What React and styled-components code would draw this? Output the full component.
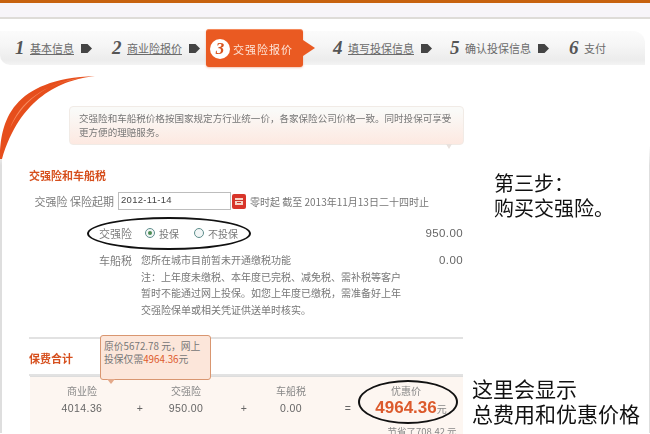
import React from "react";
import styled, { createGlobalStyle } from "styled-components";

const Global = createGlobalStyle`
  html, body { margin: 0; padding: 0; background: #fff; }
  body { font-family: "Noto Sans CJK SC", "Liberation Sans", sans-serif; }
`;
const Page = styled.div`
  position: relative; width: 650px; height: 434px; overflow: hidden; background: #fff; color: #777;
`;
const TopBar = styled.div`
  box-sizing: border-box; height: 19px; border-top: 3px solid #c7620f; border-bottom: 2px solid #dedcd8;
  background: #f7f5f9;
`;
const Stepper = styled.nav`
  display: flex; align-items: center; box-sizing: border-box; height: 34px; margin: 12px 5px 0 0; padding-left: 15px;
  border-radius: 0 12px 0 10px;
  background: linear-gradient(#fbfbfb, #f6f6f6 40%, #ececec 85%, #f4f4f4);
  filter: blur(0.45px);
`;
const Step = styled.div`
  display: flex; align-items: center; margin-left: ${p => p.$ml}px; height: 20px; flex: none;
`;
const Num = styled.span`
  width: 14px; font: italic bold 19px "Liberation Serif", serif; color: #555; line-height: 20px;
`;
const StepLabel = styled.span`
  font-size: 11px; line-height: 14px; color: #6b6b6b; white-space: nowrap;
  text-decoration: ${p => (p.$link ? "underline" : "none")};
  margin-left: 1px;
`;
const ArrowIcon = styled.svg`
  width: 11px; height: 11px; margin-left: 7px; flex: none;
`;
const Arrow = () => (
  <ArrowIcon viewBox="0 0 11 11"><path d="M0 1h6.5L11 5.500 6.500 10H0z" fill="#444" /></ArrowIcon>
);
const ActiveStep = styled.div`
  position: relative; display: flex; align-items: center; flex: none; box-sizing: border-box;
  width: 97px; height: 38px; margin-left: 6px; margin-right: 30px; padding-left: 4px;
  background: #ea5a22; border-radius: 3px; border-top: 1px solid #f58a5c;
  box-shadow: 0 1px 2px rgba(220,90,40,.35);
  &::after {
    content: ""; position: absolute; left: 97px; top: 10px;
    border-left: 12px solid #ea5a22; border-top: 8px solid transparent; border-bottom: 8px solid transparent;
  }
`;
const ActiveNum = styled.span`
  display: flex; align-items: center; justify-content: center; width: 20px; height: 20px; border-radius: 50%;
  background: #fff; color: #d9541e; font: italic bold 17px "Liberation Serif", serif;
`;
const ActiveLabel = styled.span`
  margin-left: 3px; font-size: 11px; color: #fde3d6; white-space: nowrap; letter-spacing: 1px;
`;
const Panel = styled.main`
  position: relative; box-sizing: border-box; height: 357px; margin-top: 11px; padding: 30px 186px 0 27px;
  border-left: 2px solid; border-right: 1px solid;
  border-image: linear-gradient(transparent 70px, #dedede 90px) 1;
  filter: blur(0.45px);
`;
const Swoosh = styled.svg`
  position: absolute; left: -2px; top: 0; width: 96px; height: 84px;
`;
const Notice = styled.div`
  position: relative; box-sizing: border-box; width: 395px; height: 39px; margin-left: 40px; padding: 5px 9px;
  font-size: 9.55px; line-height: 13.500px; color: #777; border-radius: 4px;
  border: 1px solid #f1ebe6; background: linear-gradient(#fafaf8 10%, #fde9e1);
  &::after {
    content: ""; position: absolute; right: 11px; bottom: -5px;
    border-top: 5px solid #e9e2de; border-left: 3px solid transparent; border-right: 3px solid transparent;
  }
`;
const SectionTitle = styled.h2`
  margin: ${p => p.$mt}px 0 0; font-size: 11px; line-height: 16px; font-weight: 700; color: #d64f1d;
`;
const Row = styled.div`
  display: flex; align-items: center; margin-top: ${p => p.$mt}px;
`;
const Label = styled.span`
  width: ${p => p.$w}px; flex: none; text-align: right; font-size: 11px; line-height: 16px; color: #7c7c7c;
`;
const DateInput = styled.div`
  box-sizing: border-box; width: 113px; height: 18px; margin-left: 4px; padding-left: 2px;
  border: 1px solid #bdbdbd; background: #fff; font: 9.500px/14px "Liberation Sans", sans-serif; color: #444; letter-spacing: .3px;
`;
const CalBtn = styled.span`
  display: flex; align-items: center; justify-content: center; width: 14px; height: 15px; margin-left: 1px;
  border-radius: 2px; background: #d8352a;
`;
const SmallText = styled.span`
  margin-left: 4px; font-size: 10px; color: #777; white-space: nowrap;
`;
const Choices = styled.div`
  display: flex; align-items: center; margin-left: 13px; flex: 1;
`;
const Radio = styled.span`
  box-sizing: border-box; display: flex; align-items: center; justify-content: center;
  width: 10px; height: 10px; border-radius: 50%; border: 1px solid #5d8d8b; background: #f2f6f6;
  margin-left: ${p => p.$ml || 0}px;
  &::after { content: ""; width: 4px; height: 4px; border-radius: 50%; background: ${p => (p.$on ? "#4d8d55" : "transparent")}; }
`;
const ChoiceText = styled.span`
  margin-left: 4px; font-size: 10px; color: #777; white-space: nowrap;
`;
const Amount = styled.span`
  font: 11.500px "Liberation Sans", sans-serif; color: #666; letter-spacing: .4px; margin-top: ${p => p.$mt || 0}px;
`;
const TaxRow = styled.div`
  display: flex; align-items: flex-start; margin-top: 11px;
`;
const TaxBody = styled.div`
  flex: 1; margin-left: 9px; font-size: 10px; line-height: 16.500px; color: #777; white-space: nowrap;
`;
const Divider = styled.div`
  height: 2px; background: #e2e2e2; margin-top: ${p => p.$mt}px;
`;
const Summary = styled.div`
  display: grid; grid-template-columns: 80px 36px 56px 60px 34px 80px 36px; grid-auto-rows: 18px;
  justify-items: center; align-items: center; box-sizing: border-box; height: 60px; margin-left: 1px;
  padding: 4px 0 0 12px; border-top: 1px solid #ddd; background: #fdf6f1;
`;
const Head = styled.span`
  font-size: 10px; color: #888; white-space: nowrap; grid-row: 1; grid-column: ${p => p.$c};
`;
const Val = styled.span`
  font: 10.500px "Liberation Sans", sans-serif; color: #666; letter-spacing: .4px; white-space: nowrap; grid-row: 2; grid-column: ${p => p.$c};
`;
const Price = styled.span`
  grid-row: 2; grid-column: 7; white-space: nowrap; font: bold 17px "Liberation Sans", sans-serif; color: #dc5a2c; margin-left: 10px;
`;
const Yuan = styled.small`
  font: 10px "Noto Sans CJK SC", sans-serif; color: #888;
`;
const Saved = styled.span`
  grid-row: 3; grid-column: 7; white-space: nowrap; font-size: 9.500px; color: #888; margin-left: 32px; margin-top: 10px;
`;
const Tooltip = styled.div`
  position: absolute; left: 98px; top: 259px; box-sizing: border-box; width: 111px; height: 45px; padding: 4px 3px;
  font-size: 9.800px; line-height: 13px; color: #777; background: #fce6da; border: 1px solid #d99670; border-radius: 3px;
  &::after {
    content: ""; position: absolute; left: 6px; bottom: -5px;
    border-top: 5px solid #e4a98a; border-left: 4px solid transparent; border-right: 4px solid transparent;
  }
`;
const Strong = styled.span`
  color: #dc5a2c;
`;
const Ellipse = styled.div`
  position: absolute; left: ${p => p.$x}px; top: ${p => p.$y}px; width: ${p => p.$w}px; height: ${p => p.$h}px;
  box-sizing: border-box; border: 2.500px solid #111; border-radius: 50%;
`;
const Annotation = styled.div`
  position: absolute; left: ${p => p.$x}px; top: ${p => p.$y}px; font-size: ${p => p.$s}px; line-height: 25px;
  color: #111; white-space: nowrap;
`;

const steps = [
  { n: 1, t: "基本信息", ml: 0, link: true },
  { n: 2, t: "商业险报价", ml: 20, link: true },
];
const later = [
  { n: 4, t: "填写投保信息", ml: 0, link: true },
  { n: 5, t: "确认投保信息", ml: 18, link: false },
  { n: 6, t: "支付", ml: 20, link: false, last: true },
];
const StepItem = ({ s }) => (
  <Step $ml={s.ml}>
    <Num>{s.n}</Num>
    <StepLabel $link={s.link}>{s.t}</StepLabel>
    {!s.last && <Arrow />}
  </Step>
);

export default function App() {
  return (
    <Page>
      <Global />
      <TopBar />
      <Stepper>
        {steps.map(s => <StepItem key={s.n} s={s} />)}
        <ActiveStep>
          <ActiveNum>3</ActiveNum>
          <ActiveLabel>交强险报价</ActiveLabel>
        </ActiveStep>
        {later.map(s => <StepItem key={s.n} s={s} />)}
      </Stepper>
      <Panel>
        <Swoosh viewBox="0 0 96 84">
          <path d="M0 83C0 45 12 3 95 0 60 4 20 22 2 83z" fill="#e64e1c" />
          <path d="M10 52C20 26 42 8 86 1 52 5 26 20 10 52z" fill="#f68c60" />
        </Swoosh>
        <Notice>
          交强险和车船税价格按国家规定方行业统一价，各家保险公司价格一致。同时投保可享受<br />更方便的理赔服务。
        </Notice>
        <SectionTitle $mt={22}>交强险和车船税</SectionTitle>
        <Row $mt={9}>
          <Label $w={85}>交强险 保险起期</Label>
          <DateInput>2012-11-14</DateInput>
          <CalBtn>
            <svg width="10" height="9" viewBox="0 0 10 9"><path d="M1 1h8v7H1z" fill="#f6d5c8" /><path d="M1 3.500h8M3 5.500h4" stroke="#c8352a" /></svg>
          </CalBtn>
          <SmallText>零时起 截至 2013年11月13日二十四时止</SmallText>
        </Row>
        <Row $mt={15}>
          <Label $w={103}>交强险</Label>
          <Choices>
            <Radio $on />
            <ChoiceText>投保</ChoiceText>
            <Radio $ml={15} />
            <ChoiceText>不投保</ChoiceText>
          </Choices>
          <Amount>950.00</Amount>
        </Row>
        <TaxRow>
          <Label $w={103}>车船税</Label>
          <TaxBody>
            您所在城市目前暂未开通缴税功能<br />
            注：上年度未缴税、本年度已完税、减免税、需补税等客户<br />
            暂时不能通过网上投保。如您上年度已缴税，需准备好上年<br />
            交强险保单或相关凭证供送单时核实。
          </TaxBody>
          <Amount $mt={2}>0.00</Amount>
        </TaxRow>
        <Divider $mt={19} />
        <SectionTitle $mt={11}>保费合计</SectionTitle>
        <Divider $mt={8} />
        <Summary>
          <Head $c={1}>商业险</Head>
          <Head $c={3}>交强险</Head>
          <Head $c={5}>车船税</Head>
          <Head $c={7}>优惠价</Head>
          <Val $c={1}>4014.36</Val>
          <Val $c={2}>+</Val>
          <Val $c={3}>950.00</Val>
          <Val $c={4}>+</Val>
          <Val $c={5}>0.00</Val>
          <Val $c={6}>=</Val>
          <Price>4964.36<Yuan>元</Yuan></Price>
          <Saved>节省了708.42 元</Saved>
        </Summary>
        <Tooltip>原价5672.78 元，网上<br />投保仅需<Strong>4964.36</Strong>元</Tooltip>
      </Panel>
      <Ellipse $x={87} $y={217} $w={164} $h={33} />
      <Ellipse $x={358} $y={380} $w={100} $h={44} />
      <Annotation $x={494} $y={170} $s={20}>第三步：<br />购买交强险。</Annotation>
      <Annotation $x={472} $y={376} $s={21}>这里会显示<br />总费用和优惠价格</Annotation>
    </Page>
  );
}
